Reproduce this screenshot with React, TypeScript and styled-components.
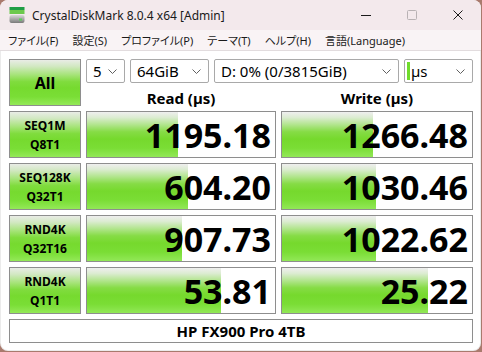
import React from 'react';
import styled, { createGlobalStyle } from 'styled-components';

const Global = createGlobalStyle`
  html, body { margin: 0; padding: 0; }
  body {
    width: 482px;
    height: 352px;
    overflow: hidden;
    background: #a97a6d;
    font-family: "Noto Sans", "Noto Sans CJK JP", sans-serif;
  }
`;

const Window = styled.div`
  width: 481px;
  height: 351px;
  background: #ffffff;
  border-radius: 8px;
  overflow: hidden;
  display: flex;
  flex-direction: column;
  box-shadow: inset 0 0 0 1px rgba(0, 0, 0, 0.08);
`;

const TitleBar = styled.div`
  height: 30px;
  flex: none;
  display: flex;
  align-items: center;
  background: #f3e9ec;
  padding-left: 9px;
`;

const AppTitle = styled.span`
  margin-left: 7px;
  font-size: 12px;
  color: #1a1a1a;
  flex: 1;
  white-space: nowrap;
`;

const Caption = styled.div`
  display: flex;
  align-self: stretch;
`;

const CaptionButton = styled.div`
  width: 46px;
  display: flex;
  align-items: center;
  justify-content: center;
`;

const MenuBar = styled.div`
  height: 20px;
  flex: none;
  display: flex;
  align-items: center;
  background: #f9f3f5;
  border-bottom: 1px solid #e2dcde;
  padding-left: 1px;
`;

const MenuItem = styled.span`
  padding: 0 7px;
  font-size: 11px;
  color: #1a1a1a;
  font-feature-settings: "palt";
  white-space: nowrap;
`;

const Board = styled.div`
  display: grid;
  grid-template-columns: 72px 190px 192px;
  grid-template-rows: 47px repeat(4, 47px) 24px;
  column-gap: 5px;
  row-gap: 5px;
  padding: 8px 0 0 9px;
`;

const greenGrad = `linear-gradient(180deg, #e9ece6 0%, #d2e8c2 14%, #a8e47c 32%, #80dc3e 48%, #76da2f 62%, #7ade36 82%, #94e958 100%)`;

const GreenButton = styled.div`
  border: 1px solid #8e8e8e;
  background: ${greenGrad};
  display: flex;
  flex-direction: column;
  align-items: center;
  justify-content: center;
  color: #000;
  font-weight: 700;
`;

const AllButton = styled(GreenButton)`
  font-size: 16px;
  padding-top: 1px;
`;

const TestLabel = styled(GreenButton)`
  font-size: 12px;
  line-height: 19px;
  padding-top: 1px;
`;

const TopPanel = styled.div`
  grid-column: 2 / span 2;
  display: flex;
  flex-direction: column;
`;

const SelectRow = styled.div`
  display: flex;
  gap: 5px;
  height: 24px;
`;

const Select = styled.div<{ $w?: number }>`
  ${(p) => (p.$w ? `width: ${p.$w}px;` : 'flex: 1;')}
  box-sizing: border-box;
  height: 24px;
  border: 1px solid #a9a9a9;
  border-radius: 2px;
  background: #fff;
  display: flex;
  align-items: center;
  padding: 0 7px 0 6px;
  font-size: 15px;
  color: #000;
  white-space: nowrap;
`;

const SelectText = styled.span`
  flex: 1;
  line-height: 22px;
`;

const UnitMark = styled.span`
  width: 3px;
  height: 18px;
  background: #6fdc2c;
  margin: 0 1px 0 -4px;
`;

const HeaderRow = styled.div`
  display: grid;
  grid-template-columns: 190px 192px;
  column-gap: 5px;
  margin-top: auto;
  margin-bottom: -2px;
`;

const ColHeader = styled.div`
  text-align: center;
  font-size: 15px;
  font-weight: 700;
  line-height: 20px;
  color: #000;
`;

const barGrad = `linear-gradient(180deg, #efefef 0%, #dcecd2 12%, #b2e58e 28%, #86dc46 44%, #76d92d 60%, #7add35 80%, #92e857 100%)`;

const ValueCell = styled.div<{ $fill: number }>`
  border: 1px solid #8e8e8e;
  background: ${barGrad} no-repeat, #ffffff;
  background-size: ${(p) => p.$fill}px 100%, auto;
  display: flex;
  align-items: center;
  justify-content: flex-end;
  padding-right: 4px;
  font-size: 34px;
  font-weight: 700;
  line-height: 1;
  color: #000;
`;

const Footer = styled.div`
  grid-column: 1 / span 3;
  border: 1px solid #8e8e8e;
  background: #fff;
  display: flex;
  align-items: center;
  justify-content: center;
  font-size: 15px;
  font-weight: 700;
  color: #000;
`;

const Chevron = () => (
  <svg width="9" height="5" viewBox="0 0 9 5">
    <polyline points="0.5,0.5 4.5,4.5 8.5,0.5" fill="none" stroke="#606060" strokeWidth="1" />
  </svg>
);

const AppIcon = () => (
  <svg width="16" height="17" viewBox="0 0 16 17">
    <defs>
      <linearGradient id="drv" x1="0" y1="0" x2="0" y2="1">
        <stop offset="0" stopColor="#d8d8d8" />
        <stop offset="1" stopColor="#7a7a7a" />
      </linearGradient>
    </defs>
    <rect x="0.5" y="0" width="15" height="3" fill="#1f9e45" />
    <rect x="0.5" y="3" width="15" height="4" fill="#6cc94d" />
    <rect x="0.5" y="8" width="15" height="8" rx="2" fill="url(#drv)" />
    <rect x="10" y="11.5" width="3" height="2" fill="#57d157" />
  </svg>
);

const rows = [
  { a: 'SEQ1M', b: 'Q8T1', r: '1195.18', rf: 91, w: '1266.48', wf: 91 },
  { a: 'SEQ128K', b: 'Q32T1', r: '604.20', rf: 101, w: '1030.46', wf: 94 },
  { a: 'RND4K', b: 'Q32T16', r: '907.73', rf: 95, w: '1022.62', wf: 94 },
  { a: 'RND4K', b: 'Q1T1', r: '53.81', rf: 134, w: '25.22', wf: 146 },
];

const menus = ['ファイル(F)', '設定(S)', 'プロファイル(P)', 'テーマ(T)', 'ヘルプ(H)', '言語(Language)'];

export default function App() {
  return (
    <>
      <Global />
      <Window>
        <TitleBar>
          <AppIcon />
          <AppTitle>CrystalDiskMark 8.0.4 x64 [Admin]</AppTitle>
          <Caption>
            <CaptionButton>
              <svg width="10" height="10" viewBox="0 0 10 10">
                <line x1="0" y1="5.5" x2="10" y2="5.5" stroke="#1a1a1a" strokeWidth="1" />
              </svg>
            </CaptionButton>
            <CaptionButton>
              <svg width="10" height="10" viewBox="0 0 10 10">
                <rect x="0.5" y="0.5" width="9" height="9" rx="1" fill="none" stroke="#b8b2b4" strokeWidth="1" />
              </svg>
            </CaptionButton>
            <CaptionButton>
              <svg width="10" height="10" viewBox="0 0 10 10">
                <path d="M0.5 0.5 L9.5 9.5 M9.5 0.5 L0.5 9.5" stroke="#1a1a1a" strokeWidth="1" />
              </svg>
            </CaptionButton>
          </Caption>
        </TitleBar>
        <MenuBar>
          {menus.map((m) => (
            <MenuItem key={m}>{m}</MenuItem>
          ))}
        </MenuBar>
        <Board>
          <AllButton>All</AllButton>
          <TopPanel>
            <SelectRow>
              <Select $w={39}>
                <SelectText>5</SelectText>
                <Chevron />
              </Select>
              <Select $w={79}>
                <SelectText>64GiB</SelectText>
                <Chevron />
              </Select>
              <Select>
                <SelectText>D: 0% (0/3815GiB)</SelectText>
                <Chevron />
              </Select>
              <Select $w={69}>
                <UnitMark />
                <SelectText>µs</SelectText>
                <Chevron />
              </Select>
            </SelectRow>
            <HeaderRow>
              <ColHeader>Read (µs)</ColHeader>
              <ColHeader>Write (µs)</ColHeader>
            </HeaderRow>
          </TopPanel>
          {rows.map((row, i) => (
            <React.Fragment key={i}>
              <TestLabel>
                <span>{row.a}</span>
                <span>{row.b}</span>
              </TestLabel>
              <ValueCell $fill={row.rf}>{row.r}</ValueCell>
              <ValueCell $fill={row.wf}>{row.w}</ValueCell>
            </React.Fragment>
          ))}
          <Footer>HP FX900 Pro 4TB</Footer>
        </Board>
      </Window>
    </>
  );
}
